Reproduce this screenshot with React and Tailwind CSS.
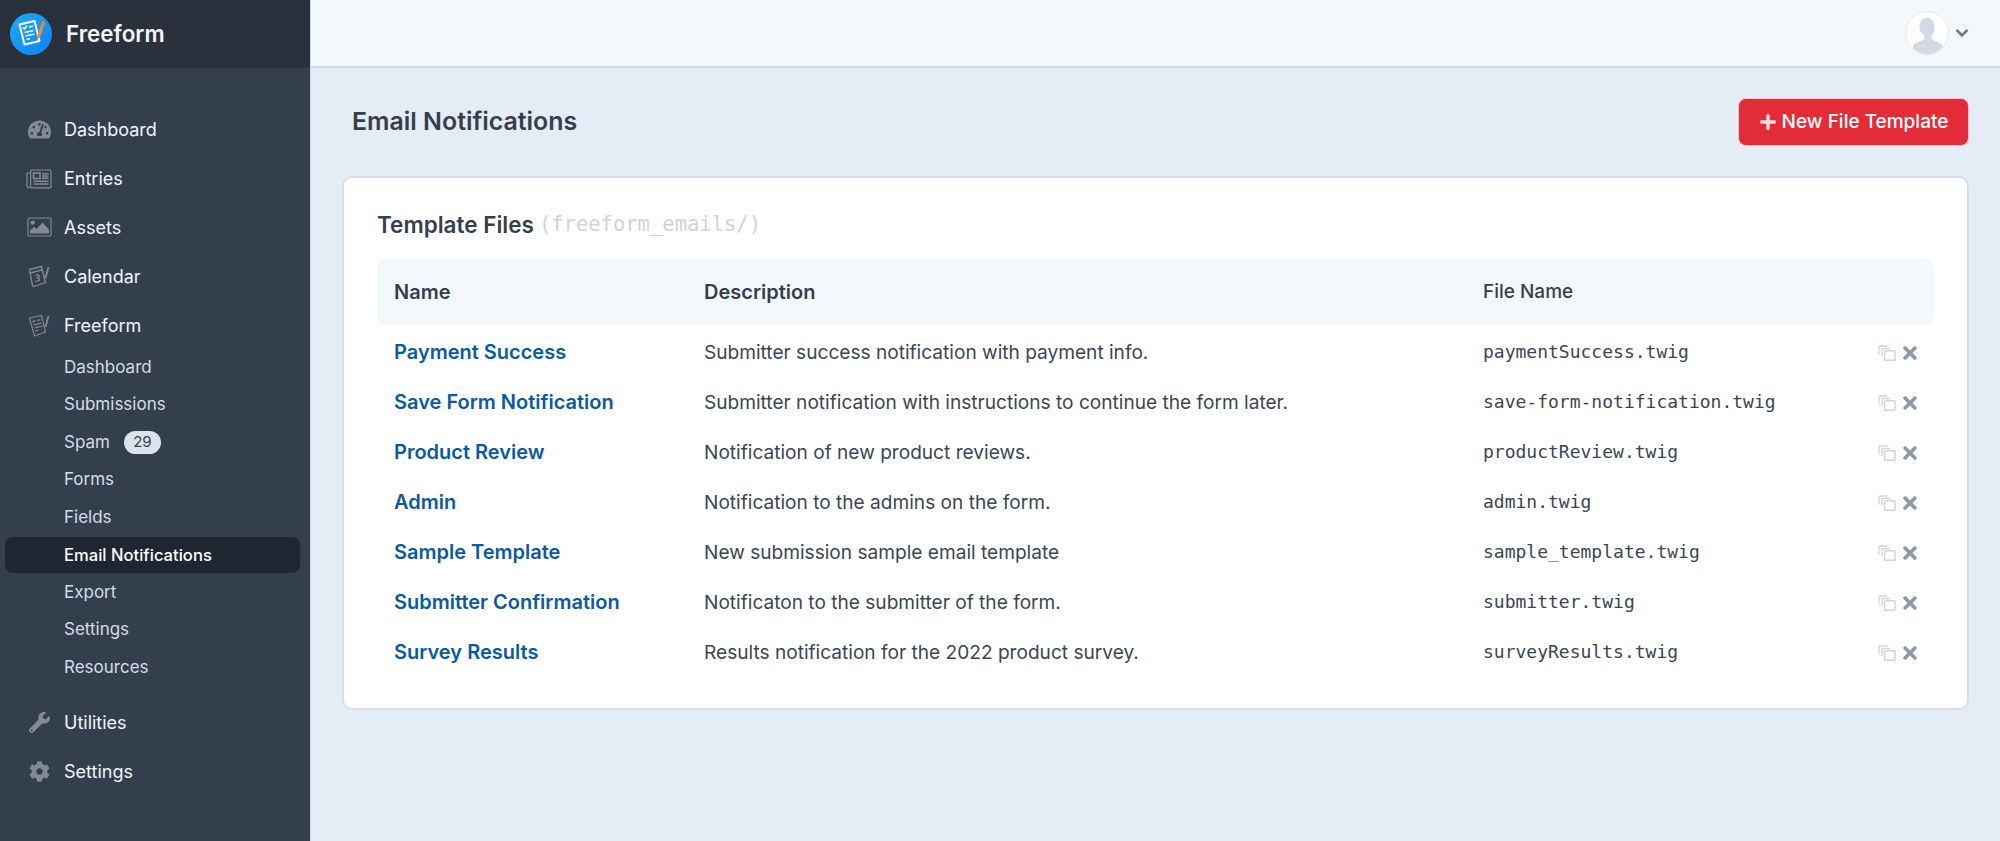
import React from 'react';
import { FaTachometerAlt, FaWrench, FaCog, FaPlus, FaTimes } from 'react-icons/fa';

function Logo() {
  return (
    <svg width="44" height="44" viewBox="0 0 44 44" className="shrink-0">
      <defs>
        <linearGradient id="logoBg" x1="0" y1="0" x2="1" y2="1">
          <stop offset="0" stopColor="#23a8fb" />
          <stop offset="1" stopColor="#0a84f0" />
        </linearGradient>
      </defs>
      <circle cx="22" cy="22" r="21" fill="url(#logoBg)" />
      <path d="M10.500 12.500l15-3.500 5 20-15 3.500z" fill="none" stroke="#fff" strokeWidth="2" strokeLinejoin="round" />
      <path d="M14 15.500l1.500 1.500 2.500-3.500M20 15l4-1M15.500 20.500l9-2M16.500 24l9-2M17.500 27.500l3.500-.8" fill="none" stroke="#fff" strokeWidth="1.500" />
      <path d="M33.500 9l2.500 1-5 15.500-2.600 2.200-.3-3.500z" fill="#f7891f" />
    </svg>
  );
}

function NewspaperIcon() {
  return (
    <svg width="26" height="20" viewBox="0 0 26 20" fill="none" stroke="currentColor" strokeWidth="1.200">
      <rect x="4.600" y="1" width="20.400" height="17.800" rx="1" />
      <path d="M4.600 4H2a1 1 0 0 0-1 1v12a1.800 1.800 0 0 0 3.600 0" />
      <rect x="7.500" y="4" width="6.500" height="5.500" strokeWidth="1.600" />
      <path d="M16 4.800h6.500M16 7h6.500M16 9.200h6.500M7.500 12.200h15M7.500 15h15" strokeWidth="1.400" />
    </svg>
  );
}

function ImageIcon() {
  return (
    <svg width="25" height="20" viewBox="0 0 25 20">
      <rect x="1" y="1" width="23" height="18" rx="1.500" fill="none" stroke="currentColor" strokeWidth="1.200" />
      <circle cx="5.800" cy="5.600" r="2.200" fill="currentColor" />
      <path d="M3 16.500v-3l4-3.500 2.500 2 6-6.500 6.500 7v4z" fill="currentColor" />
    </svg>
  );
}

function CalendarIcon() {
  return (
    <svg width="22" height="23" viewBox="0 0 22 23" fill="none" stroke="currentColor" strokeWidth="1.300" strokeLinejoin="round">
      <path d="M1.500 4.500l12-3 4 16-11.500 4a1.500 1.500 0 0 1-1.500-1z" />
      <path d="M2 8l12.500-3.200" />
      <path d="M17.500 13L20.500 2" strokeWidth="1.800" />
      <path d="M7.500 10.500c2-1.200 3.800-.8 3.500 1-.2 1-1.200 1.200-2 1.400 1.400-.2 2.500.4 2.400 1.700-.2 1.600-2.400 2-4 1.200" />
    </svg>
  );
}

function FormIcon() {
  return (
    <svg width="22" height="23" viewBox="0 0 22 23" fill="none" stroke="currentColor" strokeWidth="1.200" strokeLinejoin="round">
      <path d="M1.500 4l12-2.500 4 16.500-11 4z" />
      <path d="M4.500 7l1.300 1 1.500-2M9 6.500l3.500-.8M5.500 11l8-1.800M6.300 14l8-1.800M7 17l3.500-.8" />
      <path d="M17.500 13L20.500 2" strokeWidth="1.800" />
    </svg>
  );
}

function CopyIcon() {
  return (
    <svg width="18" height="16" viewBox="0 0 18 16" fill="none" stroke="#cfd5dc" strokeWidth="1.300">
      <path d="M9.500 1H2a1 1 0 0 0-1 1v7.500" />
      <path d="M12 3.500H5a1 1 0 0 0-1 1V11" />
      <rect x="6.500" y="5.800" width="10.500" height="9.500" rx="1" strokeWidth="1.500" />
    </svg>
  );
}

const mainItems = [
  { label: 'Dashboard', icon: <FaTachometerAlt size={23} /> },
  { label: 'Entries', icon: <NewspaperIcon /> },
  { label: 'Assets', icon: <ImageIcon /> },
  { label: 'Calendar', icon: <CalendarIcon /> },
  { label: 'Freeform', icon: <FormIcon /> },
];

const subItems = ['Dashboard', 'Submissions', 'Spam', 'Forms', 'Fields', 'Email Notifications', 'Export', 'Settings', 'Resources'];

const templates = [
  ['Payment Success', 'Submitter success notification with payment info.', 'paymentSuccess.twig'],
  ['Save Form Notification', 'Submitter notification with instructions to continue the form later.', 'save-form-notification.twig'],
  ['Product Review', 'Notification of new product reviews.', 'productReview.twig'],
  ['Admin', 'Notification to the admins on the form.', 'admin.twig'],
  ['Sample Template', 'New submission sample email template', 'sample_template.twig'],
  ['Submitter Confirmation', 'Notificaton to the submitter of the form.', 'submitter.twig'],
  ['Survey Results', 'Results notification for the 2022 product survey.', 'surveyResults.twig'],
];

function NavItem({ label, icon }) {
  return (
    <a className="flex items-center h-[48.800px] text-[18px] text-[#f1f5f9]">
      <span className="w-[64px] pl-[25px] pr-[11px] flex justify-center text-[#818a95] shrink-0">{icon}</span>
      {label}
    </a>
  );
}

function Sidebar() {
  return (
    <aside className="w-[311px] shrink-0 bg-[#343f4d] border-r border-[#cfd9e6]">
      {/* Brand */}
      <div className="h-[68px] bg-[#29323c] flex items-center pl-[9px] gap-[13px]">
        <Logo />
        <span className="text-[22.400px] font-semibold text-[#f4f6f9]">Freeform</span>
      </div>

      <nav className="pt-[37.500px]">
        {mainItems.map(it => <NavItem key={it.label} {...it} />)}

        <div>
          {subItems.map(s => {
            const active = s === 'Email Notifications';
            return (
              <a
                key={s}
                className={`flex items-center h-[36px] mb-[1.500px] ml-[5px] mr-[10px] pl-[59px] rounded-lg ${
                  active ? 'bg-[#1e2632] text-white font-medium text-[16.600px]' : 'text-[#d5dce5] text-[17px]'
                }`}
              >
                {s}
                {s === 'Spam' && (
                  <span className="ml-[14px] w-[37px] h-[23px] rounded-full bg-[#dbe3ee] text-[#343f4d] text-[15px] flex items-center justify-center">
                    29
                  </span>
                )}
              </a>
            );
          })}
        </div>

        <div className="mt-[13px]">
          <NavItem label="Utilities" icon={<FaWrench size={21} />} />
          <NavItem label="Settings" icon={<FaCog size={21} />} />
        </div>
      </nav>
    </aside>
  );
}

function TopBar() {
  return (
    <header className="h-[68px] bg-[#f3f8fd] border-b-2 border-[#d0dbe8] flex items-center justify-end pr-[31px] gap-[6px]">
      <span className="w-[44px] h-[44px] rounded-full bg-white border border-[#e3e8ee] overflow-hidden">
        <svg viewBox="0 0 44 44" width="42" height="42">
          <path d="M14 16c0-6 3.500-10 8-10s8 4 8 10c0 4-1.500 7-3 9-1 2 0 3.500 3 5l7 3c1.500 1 2 3 2 6v5H7v-5c0-3 .5-5 2-6l7-3c3-1.500 4-3 3-5-1.500-2-5-5-5-9z" fill="#d5dae2" />
        </svg>
      </span>
      <svg width="14" height="10" viewBox="0 0 14 10" fill="none" stroke="#6b7785" strokeWidth="2.600">
        <path d="M1.500 1.800L7 7.500l5.500-5.700" />
      </svg>
    </header>
  );
}

function TemplateRow({ row }) {
  const [name, desc, file] = row;
  return (
    <div className="flex items-center h-[50px]">
      <a className="w-[327px] pl-[17px] pt-[2px] text-[20px] font-semibold text-[#0b5a9e]">{name}</a>
      <div className="w-[779px] pt-[2px] text-[19.100px] text-[#3a4654]">{desc}</div>
      <div className="flex-1 font-['DejaVu_Sans_Mono',monospace] text-[18px] text-[#3a4654]">{file}</div>
      <div className="flex items-center gap-[4px] pr-[14px] pt-[4px]">
        <CopyIcon />
        <FaTimes size={20} className="text-[#8f99a6]" />
      </div>
    </div>
  );
}

export default function App() {
  return (
    <div className="flex h-[841px] overflow-hidden bg-[#e4ecf6] font-['Inter',sans-serif]">
      <Sidebar />
      <div className="flex-1 min-w-0">
        <TopBar />
        <main className="pl-[31px] pr-[31px]">
          <div className="flex items-center justify-between h-[108px]">
            <h1 className="pl-[10px] text-[24.900px] font-semibold text-[#353f4c]">Email Notifications</h1>
            <button className="h-[48px] w-[231px] rounded-lg bg-[#e22c3a] border border-[#f6c3c8] text-white text-[19px] font-medium flex items-center justify-center gap-[5px]">
              <FaPlus size={18} className="text-[#fbdfe1]" />
              New File Template
            </button>
          </div>

          <section className="h-[534px] bg-white rounded-[10px] border-2 border-[#d5dfeb] pt-[24px] px-[33px]">
            <h2 className="text-[22.500px] font-semibold text-[#353f4c] h-[45px] mb-[12px] flex items-center gap-[5px]">
              Template Files
              <span className="font-['DejaVu_Sans_Mono',monospace] font-normal text-[20.500px] text-[#cdd4dc]">(freeform_emails/)</span>
            </h2>
            <div className="flex items-center h-[66px] mb-[1px] bg-[#f3f8fd] rounded-lg text-[20px] text-[#353f4c]">
              <div className="w-[327px] pl-[17px] font-semibold">Name</div>
              <div className="w-[779px] font-semibold">Description</div>
              <div className="text-[19px] font-medium">File Name</div>
            </div>
            {templates.map(r => <TemplateRow key={r[0]} row={r} />)}
          </section>
        </main>
      </div>
    </div>
  );
}
